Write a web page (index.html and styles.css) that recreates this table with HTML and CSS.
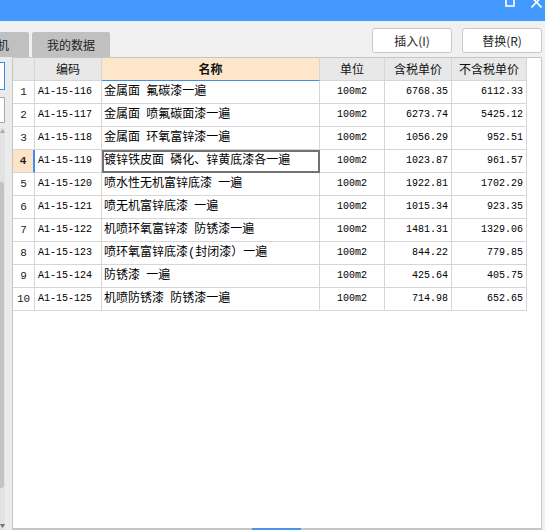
FILE: index.html
```html
<!DOCTYPE html>
<html lang="zh">
<head>
<meta charset="utf-8">
<title>定额</title>
<link rel="stylesheet" href="styles.css">
</head>
<body>
<div class="window">
  <div class="titlebar">
    <svg class="ic" width="10" height="7" viewBox="0 0 10 7"><rect x="1" y="-1" width="8" height="7" fill="none" stroke="#fff" stroke-width="1.6"/></svg>
    <svg class="ic" width="11" height="8" viewBox="0 0 11 8"><path d="M0.5 -3 L10.5 7.5 M10.5 -3 L0.5 7.5" stroke="#fff" stroke-width="1.6" fill="none"/></svg>
  </div>
  <div class="toolbar">
    <div class="tabs">
      <div class="tab tab-cut"><span>机</span></div>
      <div class="tab tab-data">我的数据</div>
    </div>
    <div class="actions">
      <button class="btn">插入(I)</button>
      <button class="btn">替换(R)</button>
    </div>
  </div>
  <div class="main">
    <div class="side">
      <div class="field field-active"></div>
      <div class="field field-2"></div>
      <div class="vtrack">
        <svg class="arr" width="5" height="4" viewBox="0 0 5 4"><path d="M0 4 L2.5 0 L5 4 Z" fill="#a8a8a8"/></svg>
        <div class="vthumb"></div>
        <div class="vspace"></div>
        <svg class="arr" width="5" height="4" viewBox="0 0 5 4"><path d="M0 0 L5 0 L2.5 4 Z" fill="#707070"/></svg>
      </div>
    </div>
    <div class="sheet">
      <div class="grid">
        <div class="row head">
          <div class="c num"></div>
          <div class="c ctr">编码</div>
          <div class="c ctr name-h">名称</div>
          <div class="c ctr">单位</div>
          <div class="c ctr">含税单价</div>
          <div class="c ctr">不含税单价</div>
        </div>
        <div class="row">
          <div class="c num">1</div><div class="c code">A1-15-116</div><div class="c name">金属面 氟碳漆一遍</div><div class="c unit">100m2</div><div class="c price">6768.35</div><div class="c price">6112.33</div>
        </div>
        <div class="row">
          <div class="c num">2</div><div class="c code">A1-15-117</div><div class="c name">金属面 喷氟碳面漆一遍</div><div class="c unit">100m2</div><div class="c price">6273.74</div><div class="c price">5425.12</div>
        </div>
        <div class="row">
          <div class="c num">3</div><div class="c code">A1-15-118</div><div class="c name">金属面 环氧富锌漆一遍</div><div class="c unit">100m2</div><div class="c price">1056.29</div><div class="c price">952.51</div>
        </div>
        <div class="row sel">
          <div class="c num">4</div><div class="c code">A1-15-119</div><div class="c name focus">镀锌铁皮面 磷化、锌黄底漆各一遍</div><div class="c unit">100m2</div><div class="c price">1023.87</div><div class="c price">961.57</div>
        </div>
        <div class="row">
          <div class="c num">5</div><div class="c code">A1-15-120</div><div class="c name">喷水性无机富锌底漆 一遍</div><div class="c unit">100m2</div><div class="c price">1922.81</div><div class="c price">1702.29</div>
        </div>
        <div class="row">
          <div class="c num">6</div><div class="c code">A1-15-121</div><div class="c name">喷无机富锌底漆 一遍</div><div class="c unit">100m2</div><div class="c price">1015.34</div><div class="c price">923.35</div>
        </div>
        <div class="row">
          <div class="c num">7</div><div class="c code">A1-15-122</div><div class="c name">机喷环氧富锌漆 防锈漆一遍</div><div class="c unit">100m2</div><div class="c price">1481.31</div><div class="c price">1329.06</div>
        </div>
        <div class="row">
          <div class="c num">8</div><div class="c code">A1-15-123</div><div class="c name">喷环氧富锌底漆(封闭漆）一遍</div><div class="c unit">100m2</div><div class="c price">844.22</div><div class="c price">779.85</div>
        </div>
        <div class="row">
          <div class="c num">9</div><div class="c code">A1-15-124</div><div class="c name">防锈漆 一遍</div><div class="c unit">100m2</div><div class="c price">425.64</div><div class="c price">405.75</div>
        </div>
        <div class="row">
          <div class="c num">10</div><div class="c code">A1-15-125</div><div class="c name">机喷防锈漆 防锈漆一遍</div><div class="c unit">100m2</div><div class="c price">714.98</div><div class="c price">652.65</div>
        </div>
      </div>
      <div class="filler"></div>
      <div class="hbar"><div class="hthumb"></div></div>
    </div>
  </div>
</div>
</body>
</html>
```

FILE: styles.css
```css
* { box-sizing: border-box; margin: 0; padding: 0; }
html, body { width: 545px; height: 530px; overflow: hidden; }
body {
  background: #f0f0f0;
  font-family: "Noto Sans CJK SC", sans-serif;
  font-size: 12px;
  color: #000;
}
.window { display: flex; flex-direction: column; height: 530px; }

.titlebar {
  height: 21px;
  background: #4499ff;
  display: flex;
  justify-content: flex-end;
  align-items: flex-start;
  gap: 16px;
  padding-right: 3px;
}
.ic { display: block; }

.toolbar {
  height: 36px;
  display: flex;
  justify-content: space-between;
  padding-right: 3px;
}
.tabs { display: flex; align-items: flex-end; gap: 3px; }
.tab {
  height: 25px;
  background: #c0c0c0;
  display: flex;
  align-items: center;
  justify-content: center;
  color: #1e1e1e;
  border-radius: 2px 2px 0 0;
  line-height: 1;
}
.tab-cut { width: 29px; justify-content: flex-start; overflow: hidden; border-radius: 0 2px 0 0; }
.tab-cut span { margin-left: -3px; }
.tab-data { width: 78px; }

.actions { display: flex; gap: 10px; padding-top: 7px; }
.btn {
  width: 80px;
  height: 25px;
  background: #fff;
  border: 1px solid #c8c8c8;
  border-radius: 3px;
  font: inherit;
  color: #1e1e1e;
  line-height: 1;
}

.main { flex: 1; display: flex; padding-right: 3px; min-height: 0; }

.side { width: 12px; background: #ebebeb; display: flex; flex-direction: column; }
.field { width: 6px; margin-left: -1px; background: #fff; border: 1px solid #a9a9a9; }
.field-active { height: 28px; margin-top: 5px; border-color: #3c8ce8; }
.field-2 { height: 26px; margin-top: 7px; }
.vtrack {
  flex: 1;
  width: 5px;
  margin-top: 5px;
  background: #e2e2e2;
  display: flex;
  flex-direction: column;
  padding: 1px 0 2px;
}
.arr { display: block; }
.vthumb {
  width: 4px;
  height: 306px;
  margin-top: 49px;
  background: #c3c3c3;
  border-radius: 0 3px 3px 0;
}
.vspace { flex: 1; }

.sheet {
  width: 530px;
  background: #fff;
  border: 1px solid #c6c6c6;
  border-bottom: none;
  display: flex;
  flex-direction: column;
}
.grid { display: flex; flex-direction: column; }
.row {
  display: grid;
  grid-template-columns: 22px 67px 218px 65px 67px 75px;
  height: 23px;
}
.c {
  border-right: 1px solid #d6d6d6;
  border-bottom: 1px solid #d6d6d6;
  display: flex;
  align-items: center;
  white-space: nowrap;
  overflow: hidden;
  line-height: 1;
}
.head .c { background: #e8e8e8; justify-content: center; color: #111; }
.head .name-h {
  background: #fde6c9;
  font-weight: bold;
  border-bottom-color: #3d8ef0;
}
.num {
  justify-content: center;
  font-family: "Liberation Mono", monospace;
  font-size: 11px;
  color: #222;
}
.code {
  padding-left: 3px;
  font-family: "Liberation Mono", monospace;
  font-size: 10px;
}
.name {
  padding-left: 2px;
  font-family: "Liberation Mono", "Noto Sans CJK SC", monospace;
  font-size: 12px;
  word-spacing: -1px;
}
.unit {
  justify-content: center;
  font-family: "Liberation Mono", monospace;
  font-size: 10px;
}
.price {
  justify-content: flex-end;
  padding-right: 3px;
  font-family: "Liberation Mono", monospace;
  font-size: 10px;
}
.sel .num {
  background: #fde4c6;
  font-weight: bold;
  border-right: 2px solid #3d8ef0;
}
.focus { outline: 2px solid #727272; outline-offset: -2px; }

.filler { flex: 1; }
.hbar { height: 2px; background: #c6c6c6; }
.hthumb { width: 49px; height: 2px; margin-left: 239px; background: #4a94e8; }
```
